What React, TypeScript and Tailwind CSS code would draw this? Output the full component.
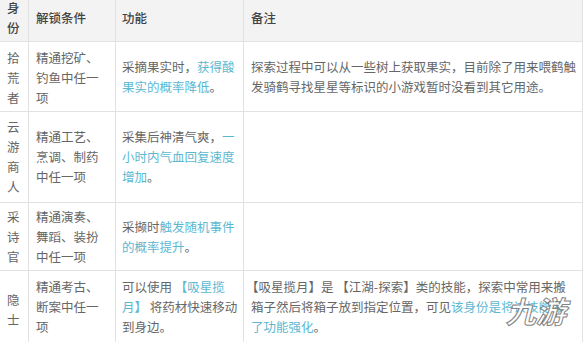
import React from "react";

const H = ({ children }: { children: React.ReactNode }) => (
  <span className="text-[#5cb8d1]">{children}</span>
);

const cell = "border-r border-b border-[#e2e2e2] flex items-center";
const head = "bg-[#f3f3f3] pb-[6px] font-medium text-[#444]";

export default function App() {
  return (
    <div
      className="relative w-[584px] h-[342px] overflow-hidden bg-white text-[12.5px] leading-[20px] text-[#666]"
      style={{ fontFamily: '"Noto Sans CJK SC", "Noto Sans", sans-serif' }}
    >
      <div className="grid grid-cols-[29px_87px_128px_339px] grid-rows-[42px_70px_91px_68px_72px] whitespace-nowrap">
        {/* header */}
        <div className={`${cell} ${head} pl-[7px] whitespace-normal`}>
          <div className="w-[13px] pt-[1px]">身份</div>
        </div>
        <div className={`${cell} ${head} pl-[7px]`}>解锁条件</div>
        <div className={`${cell} ${head} pl-[6px]`}>功能</div>
        <div className={`${cell} ${head} pl-[7px]`}>备注</div>

        {/* row 1 */}
        <div className={`${cell} pl-[7px] pt-[3px]`}>
          <div>拾<br />荒<br />者</div>
        </div>
        <div className={`${cell} pl-[7px] pt-[3px]`}>
          <div>精通挖矿、<br />钓鱼中任一<br />项</div>
        </div>
        <div className={`${cell} pl-[6px]`}>
          <div>
            采摘果实时，<H>获得酸</H>
            <br />
            <H>果实的概率降低</H>。
          </div>
        </div>
        <div className={`${cell} pl-[7px]`}>
          <div>
            探索过程中可以从一些树上获取果实，目前除了用来喂鹤触
            <br />
            发骑鹤寻找星星等标识的小游戏暂时没看到其它用途。
          </div>
        </div>

        {/* row 2 */}
        <div className={`${cell} pl-[7px]`}>
          <div>云<br />游<br />商<br />人</div>
        </div>
        <div className={`${cell} pl-[7px]`}>
          <div>精通工艺、<br />烹调、制药<br />中任一项</div>
        </div>
        <div className={`${cell} pl-[6px]`}>
          <div>
            采集后神清气爽，<H>一</H>
            <br />
            <H>小时内气血回复速度</H>
            <br />
            <H>增加</H>。
          </div>
        </div>
        <div className={`${cell}`} />

        {/* row 3 */}
        <div className={`${cell} pl-[7px]`}>
          <div>采<br />诗<br />官</div>
        </div>
        <div className={`${cell} pl-[7px]`}>
          <div>精通演奏、<br />舞蹈、装扮<br />中任一项</div>
        </div>
        <div className={`${cell} pl-[6px]`}>
          <div>
            采撷时<H>触发随机事件</H>
            <br />
            <H>的概率提升</H>。
          </div>
        </div>
        <div className={`${cell}`} />

        {/* row 4 */}
        <div className={`${cell} pl-[7px] pt-[6px]`}>
          <div>隐<br />士</div>
        </div>
        <div className={`${cell} pl-[7px]`}>
          <div>精通考古、<br />断案中任一<br />项</div>
        </div>
        <div className={`${cell} pl-[6px]`}>
          <div>
            可以使用 <H>【吸星揽</H>
            <br />
            <H>月】</H> 将药材快速移动
            <br />
            到身边。
          </div>
        </div>
        <div className={`${cell} pl-[2px]`}>
          <div>
            【吸星揽月】是 【江湖-探索】类的技能，探索中常用来搬
            <br />
            <span className="pl-[5px]">箱子然后将箱子放到指定位置，可见<H>该身份是将该技能做</H></span>
            <br />
            <span className="pl-[5px]"><H>了功能强化</H>。</span>
          </div>
        </div>
      </div>

      <span
        aria-hidden="true"
        className="pointer-events-none absolute left-[506px] top-[290px] text-[30px] leading-[40px] font-bold text-white italic opacity-90 [-webkit-text-stroke:1px_#777]"
        style={{ fontFamily: '"Noto Sans CJK SC", sans-serif' }}
      >
        九游
      </span>
    </div>
  );
}
